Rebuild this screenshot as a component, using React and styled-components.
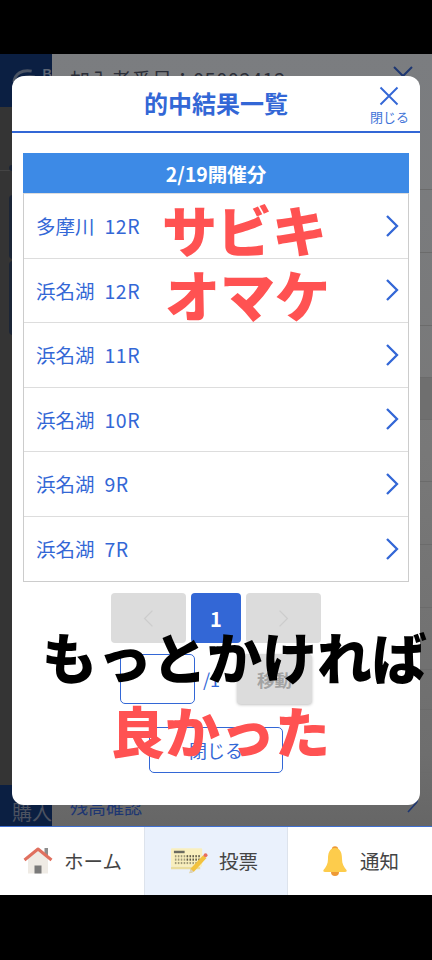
import React from "react";
import styled, { createGlobalStyle } from "styled-components";

const Global = createGlobalStyle`
  html, body { margin: 0; padding: 0; background: #000; }
  body { font-family: "Noto Sans CJK JP", "Noto Sans", sans-serif; }
  * { box-sizing: border-box; }
`;

const Screen = styled.div`
  width: 432px;
  height: 960px;
  background: #000;
  padding: 54px 0 65px;
  display: flex;
  flex-direction: column;
  overflow: hidden;
`;
const Stage = styled.div`
  position: relative;
  flex: 1;
  display: flex;
  flex-direction: column;
  min-height: 0;
  background: linear-gradient(180deg, #7b7d80 0, #787878 400px, #6e6e6e 700px, #666 100%);
  overflow: hidden;
`;
const PageHeader = styled.div`
  height: 53px;
  flex: none;
  display: flex;
  align-items: flex-start;
  color: #2b2e38;
`;
const LogoCell = styled.div`
  width: 52px;
  height: 100%;
  background: #0b1f42;
  display: flex;
  align-items: flex-start;
  padding: 12px 0 0 12px;
  gap: 7px;
  color: #5d6675;
  font: 700 13px "Liberation Sans", sans-serif;
`;
const MemberText = styled.div`
  margin: 12px 0 0 18px;
  font-size: 20px;
  line-height: 28px;
  flex: 1;
  letter-spacing: 0.5px;
`;
const HeaderClose = styled.svg`
  width: 22px;
  height: 22px;
  margin: 11px 18px 0 0;
`;
const PageBody = styled.div`
  flex: 1;
  display: flex;
  min-height: 0;
`;
const LeftRail = styled.div`
  width: 52px;
  background: #343434;
  display: flex;
  flex-direction: column;
`;
const RailBlock = styled.div`
  height: ${(p) => p.$h}px;
  flex: none;
  border-bottom: ${(p) => (p.$line ? "1px solid #444" : "none")};
  padding: ${(p) => p.$top || 0}px 0 0 9px;
`;
const RailCard = styled.div`
  width: 8px;
  height: ${(p) => p.$h}px;
  background: #1b2536;
  border-radius: 4px 0 0 4px;
`;
const RightArea = styled.div`
  flex: 1;
  display: flex;
  flex-direction: column;
`;
const RightRow = styled.div`
  width: 100%;
  height: ${(p) => p.$h}px;
  flex: none;
  border-bottom: 1px solid #6b6b6b;
  background: ${(p) => (p.$dim ? "#6f6f6f" : "transparent")};
`;
const PageFooter = styled.div`
  height: 41px;
  flex: none;
  display: flex;
  align-items: flex-end;
`;
const BuyCell = styled.div`
  width: 52px;
  height: 100%;
  background: #0b1f42;
  color: #4c5260;
  font-size: 20px;
  line-height: 26px;
  display: flex;
  align-items: flex-end;
  padding: 0 0 1px 12px;
  overflow: hidden;
  white-space: nowrap;
`;
const BalanceCell = styled.div`
  flex: 1;
  height: 100%;
  display: flex;
  align-items: flex-end;
  justify-content: space-between;
  padding: 0 13px 7px 18px;
  color: #1d3672;
  font-size: 18px;
  line-height: 26px;
`;
const FootArrow = styled.svg`
  width: 12px;
  height: 14px;
  margin-bottom: 6px;
`;

const Modal = styled.div`
  position: absolute;
  left: 12px;
  top: 22px;
  width: 408px;
  height: 729px;
  background: #fff;
  border-radius: 12px;
  display: flex;
  flex-direction: column;
  align-items: center;
`;
const ModalHead = styled.div`
  width: 100%;
  height: 57px;
  flex: none;
  border-bottom: 2px solid #3367d6;
  display: flex;
  align-items: center;
  justify-content: center;
  position: relative;
  color: #3367d6;
`;
const ModalTitle = styled.h2`
  margin: 0 0 2px;
  font-size: 24px;
  line-height: 30px;
  font-weight: 700;
`;
const CloseX = styled.button`
  position: absolute;
  right: 11px;
  top: 10px;
  border: 0;
  background: none;
  padding: 0;
  display: flex;
  flex-direction: column;
  align-items: center;
  gap: 2px;
  color: #3f74d8;
  font: 400 13px/18px "Noto Sans CJK JP", sans-serif;
`;
const Section = styled.div`
  width: 386px;
  margin-top: 20px;
  flex: none;
`;
const SectionHead = styled.div`
  height: 40px;
  background: #3d8ae6;
  color: #fff;
  font-size: 19.5px;
  font-weight: 700;
  display: flex;
  align-items: center;
  justify-content: center;
`;
const List = styled.div`
  border: 1px solid #ccc;
  border-top-color: #ddd;
`;
const Row = styled.div`
  height: 64.5px;
  display: flex;
  align-items: center;
  justify-content: space-between;
  padding: 0 9px 0 12px;
  color: #3367d6;
  font-size: 19.5px;
  border-bottom: 1px solid #ddd;
  &:last-child { border-bottom: 0; }
`;
const Venue = styled.span`
  display: flex;
  gap: 10px;
`;
const RaceNo = styled.span`
  letter-spacing: 0.5px;
`;
const Pager = styled.div`
  margin-top: 11px;
  display: flex;
  gap: 5px;
  flex: none;
`;
const PageButton = styled.div`
  width: ${(p) => (p.$current ? 50 : 75)}px;
  height: 50px;
  border-radius: 4px;
  background: ${(p) => (p.$current ? "#3367d6" : "#dcdcdc")};
  color: #fff;
  font-size: 20px;
  font-weight: 700;
  display: flex;
  align-items: center;
  justify-content: center;
`;
const JumpRow = styled.div`
  margin-top: 11px;
  height: 50px;
  display: flex;
  align-items: center;
  flex: none;
`;
const JumpInput = styled.div`
  width: 75px;
  height: 50px;
  border: 1px solid #3367d6;
  border-radius: 5px;
`;
const JumpTotal = styled.span`
  color: #3367d6;
  font-size: 18px;
  margin: 0 17px 0 8px;
`;
const JumpButton = styled.div`
  width: 75px;
  height: 50px;
  border-radius: 4px;
  background: #dcdcdc;
  color: #a3a3a3;
  font-size: 17.5px;
  font-weight: 700;
  display: flex;
  align-items: center;
  justify-content: center;
  box-shadow: 0 1px 3px rgba(0, 0, 0, 0.25);
`;
const CloseButton = styled.div`
  margin-top: 23px;
  width: 134px;
  height: 46px;
  border: 1px solid #3367d6;
  border-radius: 5px;
  color: #3367d6;
  font-size: 18px;
  display: flex;
  align-items: center;
  justify-content: center;
  flex: none;
`;

const Caption = styled.div`
  position: absolute;
  left: ${(p) => p.$x}px;
  top: ${(p) => p.$y}px;
  font-size: ${(p) => p.$size || 55}px;
  line-height: 1;
  font-weight: 900;
  white-space: nowrap;
  color: ${(p) => (p.$black ? "#000" : "#ff5252")};
`;

const TabBar = styled.nav`
  height: 69px;
  flex: none;
  background: #fff;
  border-top: 1px solid #3f6fd2;
  display: flex;
`;
const Tab = styled.div`
  width: 144px;
  height: 100%;
  display: flex;
  align-items: center;
  justify-content: center;
  gap: ${(p) => p.$gap}px;
  color: #444;
  font-size: 19.5px;
  background: ${(p) => (p.$active ? "#eaf1fc" : "#fff")};
  border-left: ${(p) => (p.$active ? "1px solid #dde3ec" : "none")};
  border-right: ${(p) => (p.$active ? "1px solid #dde3ec" : "none")};
  padding: 0 ${(p) => p.$padR || 0}px 1px ${(p) => p.$padL || 0}px;
`;

const rows = [
  ["多摩川", "12R"],
  ["浜名湖", "12R"],
  ["浜名湖", "11R"],
  ["浜名湖", "10R"],
  ["浜名湖", "9R"],
  ["浜名湖", "7R"],
];

const Chev = ({ dir = "r", color = "#3367d6", w = 2.3, width = 14, height = 24 }) => (
  <svg width={width} height={height} viewBox="0 0 14 24" fill="none">
    <path
      d={dir === "r" ? "M2 2 L12 12 L2 22" : "M12 2 L2 12 L12 22"}
      stroke={color}
      strokeWidth={w}
    />
  </svg>
);

const HomeIcon = () => (
  <svg width="30" height="27" viewBox="0 0 30 27">
    <rect x="21.5" y="1" width="3.5" height="8" fill="#8d8d8d" />
    <path d="M5 11 L15 3 L25 11 V26.5 H5 Z" fill="#efebe5" />
    <path d="M1.5 13 L15 2 L28.5 13" fill="none" stroke="#e0705f" strokeWidth="3" strokeLinejoin="round" />
    <rect x="11.5" y="18.5" width="7" height="8" fill="#7a7a7a" />
  </svg>
);

const TicketIcon = () => (
  <svg width="37" height="27" viewBox="0 0 38 27">
    <rect x="0" y="1" width="32" height="19" rx="1" fill="#f9efbe" />
    <rect x="0" y="20" width="30" height="2.5" fill="#eadc9c" />
    <rect x="3" y="3.5" width="11" height="2.5" fill="#6b6b60" />
    {[8, 11.5, 15].map((y) =>
      [4, 7, 10, 13, 16, 19, 22, 25, 28].map((x) => (
        <rect key={`${x}-${y}`} x={x} y={y} width="1.6" height="2.2" fill={x > 15 && y < 15 ? "#5f5a48" : "#a09a78"} />
      ))
    )}
    <path d="M20 22 L33 8 L36.5 11 L23.5 25 L19 26.5 Z" fill="#f2c23e" />
    <path d="M23.5 25 L19 26.5 L20 22 Z" fill="#d8d2c2" />
    <circle cx="35.5" cy="8" r="2" fill="#e8705f" />
  </svg>
);

const BellIcon = () => (
  <svg width="24" height="30" viewBox="0 0 24 30">
    <circle cx="12" cy="3.5" r="3.2" fill="#ee9a36" />
    <circle cx="12" cy="26" r="4" fill="#ee9a36" />
    <path d="M12 2 C6 2 5 8 5 13 C5 18 3 21 0.5 24 C0 25 0.5 26 2 26 H22 C23.5 26 24 25 23.5 24 C21 21 19 18 19 13 C19 8 18 2 12 2 Z" fill="#fdcc4c" />
  </svg>
);

export default function App() {
  return (
    <>
      <Global />
      <Screen>
        <Stage>
          <PageHeader>
            <LogoCell>
              <svg width="24" height="24" viewBox="0 0 24 24" fill="none" stroke="#4b5464" strokeWidth="3">
                <path d="M2 16 C3 8 10 3 20 5" />
                <path d="M6 20 C7 13 13 9 23 11" />
              </svg>
              B
            </LogoCell>
            <MemberText>加入者番号：05002412</MemberText>
            <HeaderClose viewBox="0 0 22 22" fill="none" stroke="#1d3672" strokeWidth="2">
              <path d="M2 2 L20 20 M20 2 L2 20" />
            </HeaderClose>
          </PageHeader>
          <PageBody>
            <LeftRail>
              <RailBlock $h={64} $line $top={58}>
                <RailCard $h={6} />
              </RailBlock>
              <RailBlock $h={90} $top={24}>
                <RailCard $h={64} />
              </RailBlock>
              <RailBlock $h={80}>
                <RailCard $h={74} />
              </RailBlock>
            </LeftRail>
            <RightArea>
              <RightRow $h={83} />
              <RightRow $h={63} />
              <RightRow $h={73} />
              <RightRow $h={52} />
              <RightRow $h={42} $dim />
              <RightRow $h={62} />
              <RightRow $h={63} />
              <RightRow $h={63} />
              <RightRow $h={62} />
              <RightRow $h={40} />
              <RightRow $h={63} />
            </RightArea>
          </PageBody>
          <PageFooter>
            <BuyCell>購入</BuyCell>
            <BalanceCell>
              残高確認
              <FootArrow viewBox="0 0 12 14" fill="none" stroke="#1d3672" strokeWidth="1.6">
                <path d="M1 13 L10 3 M5 2 H11" />
              </FootArrow>
            </BalanceCell>
          </PageFooter>

          <Modal>
            <ModalHead>
              <ModalTitle>的中結果一覧</ModalTitle>
              <CloseX>
                <svg width="20" height="20" viewBox="0 0 20 20" fill="none" stroke="#3367d6" strokeWidth="1.9">
                  <path d="M1.5 1.5 L18.5 18.5 M18.5 1.5 L1.5 18.5" />
                </svg>
                閉じる
              </CloseX>
            </ModalHead>
            <Section>
              <SectionHead>2/19開催分</SectionHead>
              <List>
                {rows.map(([v, r], i) => (
                  <Row key={i}>
                    <Venue>{v}<RaceNo>{r}</RaceNo></Venue>
                    <Chev />
                  </Row>
                ))}
              </List>
            </Section>
            <Pager>
              <PageButton><Chev dir="l" color="#cccccc" w={1.6} width={11} height={19} /></PageButton>
              <PageButton $current>1</PageButton>
              <PageButton><Chev color="#cccccc" w={1.6} width={11} height={19} /></PageButton>
            </Pager>
            <JumpRow>
              <JumpInput />
              <JumpTotal>/1</JumpTotal>
              <JumpButton>移動</JumpButton>
            </JumpRow>
            <CloseButton>閉じる</CloseButton>
          </Modal>

          <Caption $x={162} $y={147} $size={55}>サビキ</Caption>
          <Caption $x={165} $y={212} $size={55}>オマケ</Caption>
          <Caption $x={42} $y={574} $size={55} $black>もっとかければ</Caption>
          <Caption $x={110} $y={648} $size={55}>良かった</Caption>
        </Stage>
        <TabBar>
          <Tab $gap={11} $padL={1}><HomeIcon />ホーム</Tab>
          <Tab $active $gap={11} $padR={3}><TicketIcon />投票</Tab>
          <Tab $gap={13} $padL={2}><BellIcon />通知</Tab>
        </TabBar>
      </Screen>
    </>
  );
}
